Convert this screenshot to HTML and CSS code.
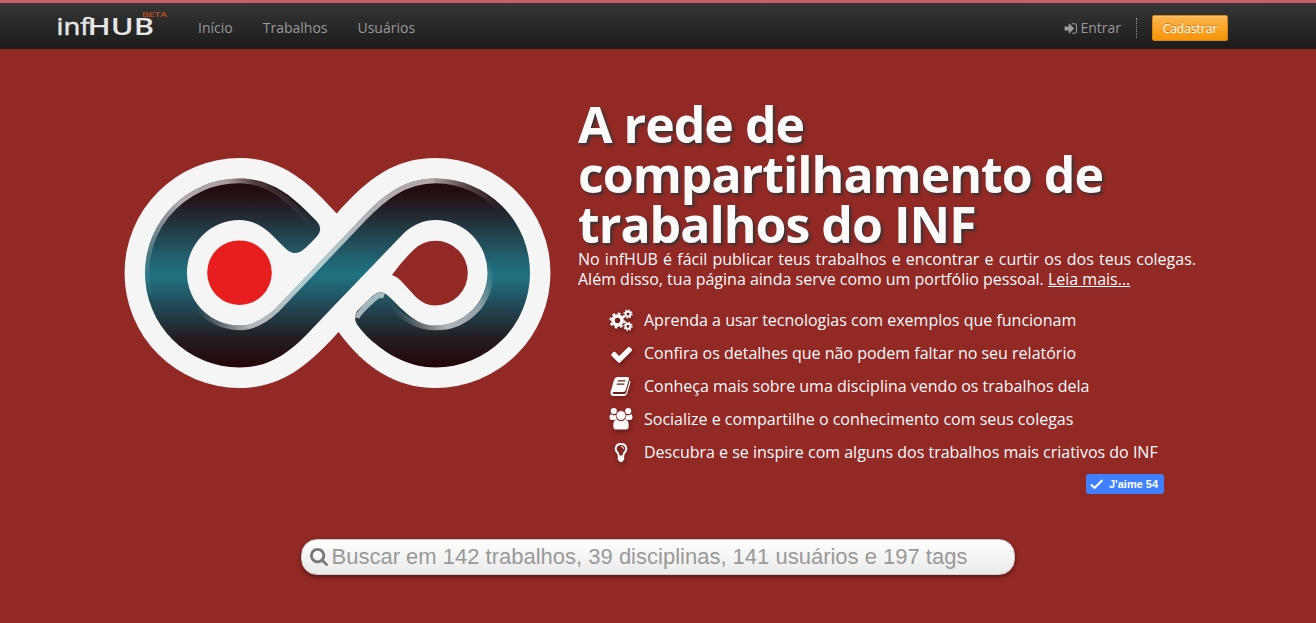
FILE: index.html
```html
<!DOCTYPE html>
<html lang="pt-BR">
<head>
<meta charset="utf-8">
<title>infHUB</title>
<link rel="stylesheet" href="styles.css">
</head>
<body>
<header class="navbar">
  <a class="brand">
    <svg width="112" height="38" viewBox="56 6 112 38">
      <text class="brand-light" x="56.500" y="35" textLength="33" lengthAdjust="spacingAndGlyphs">inf</text>
      <text class="brand-bold" x="87.500" y="35" textLength="66.500" lengthAdjust="spacingAndGlyphs">HUB</text>
      <text class="brand-beta" x="142" y="16.500" textLength="25" lengthAdjust="spacingAndGlyphs">BETA</text>
    </svg>
  </a>
  <nav class="menu"><a>Início</a><a>Trabalhos</a><a>Usuários</a></nav>
  <div class="account">
    <a class="login"><svg class="login-icon" viewBox="64 256 1600 1280"><path d="M1312 896q0 26-19 45l-544 544q-19 19-45 19t-45-19-19-45v-288h-448q-26 0-45-19t-19-45v-384q0-26 19-45t45-19h448v-288q0-26 19-45t45-19 45 19l544 544q19 19 19 45zm352-352v704q0 119-84.5 203.5t-203.5 84.5h-320q-13 0-22.5-9.5t-9.5-22.5q0-4-1-20t-.5-26.5 3-23.5 10-19.5 20.5-6.5h320q66 0 113-47t47-113v-704q0-66-47-113t-113-47h-312l-11.5-1-11.5-3-8-5.5-7-9-2-13.5q0-4-1-20t-.5-26.5 3-23.5 10-19.5 20.5-6.5h320q119 0 203.5 84.5t84.5 203.5z"/></svg>Entrar</a>
    <span class="divider"></span>
    <a class="signup">Cadastrar</a>
  </div>
</header>
<main class="hero">
  <div class="row">
    <svg class="logo" width="436" height="246" viewBox="120 150 436 246">
      <defs>
        <linearGradient id="band" gradientUnits="userSpaceOnUse" x1="0" y1="178" x2="0" y2="368">
          <stop offset="0" stop-color="#230708"/><stop offset=".07" stop-color="#230d10"/><stop offset=".17" stop-color="#23222a"/><stop offset=".3" stop-color="#22434e"/><stop offset=".43" stop-color="#216372"/><stop offset=".51" stop-color="#217182"/><stop offset=".6" stop-color="#215d6b"/><stop offset=".72" stop-color="#223d47"/><stop offset=".84" stop-color="#231e22"/><stop offset="1" stop-color="#230406"/>
        </linearGradient>
        <linearGradient id="shineL" gradientUnits="userSpaceOnUse" x1="148" y1="295" x2="312" y2="222">
          <stop offset="0" stop-color="#fff" stop-opacity="0"/><stop offset=".2" stop-color="#fff" stop-opacity=".4"/><stop offset=".38" stop-color="#fff" stop-opacity=".65"/><stop offset=".66" stop-color="#fff" stop-opacity=".6"/><stop offset=".8" stop-color="#fff" stop-opacity=".2"/><stop offset="1" stop-color="#fff" stop-opacity="0"/>
        </linearGradient>
        <linearGradient id="shineR" gradientUnits="userSpaceOnUse" x1="430" y1="0" x2="500" y2="0">
          <stop offset="0" stop-color="#fff" stop-opacity=".65"/><stop offset=".5" stop-color="#fff" stop-opacity=".25"/><stop offset="1" stop-color="#fff" stop-opacity="0"/>
        </linearGradient>
        <linearGradient id="shineB" gradientUnits="userSpaceOnUse" x1="197" y1="0" x2="250" y2="0">
          <stop offset="0" stop-color="#fff" stop-opacity="0"/><stop offset="1" stop-color="#fff" stop-opacity=".65"/>
        </linearGradient>
        <linearGradient id="shineI" gradientUnits="userSpaceOnUse" x1="390" y1="305" x2="490" y2="262">
          <stop offset="0" stop-color="#fff" stop-opacity="0"/><stop offset=".4" stop-color="#fff" stop-opacity=".65"/><stop offset=".75" stop-color="#fff" stop-opacity=".5"/><stop offset="1" stop-color="#fff" stop-opacity="0"/>
        </linearGradient>
        <filter id="soft" x="-10%" y="-10%" width="120%" height="120%"><feGaussianBlur stdDeviation=".6"/></filter>
        <path id="armLeft" d="M239.500 178.500C268 178.500 288 193 305 209.500L317 221.500Q322 227 319 233.500Q317 237 306 247.500Q300 253 295 253Q290 253 285 248L273 236Q257 220 239.500 220A52.500 52.700 0 0 0 239.500 325.500C255 325.500 267 316 275 309L363 216.700C381 198 402 178.500 435.500 178.500A94.500 94.500 0 0 1 435.500 367.500C410 367.500 389 355 377 345Q366 337 357 324.500Q353 318 357 311Q360 308 373 295.500Q380 290 386 294Q390 297 399 306.500C411 318 420 325.500 435.500 325.500A52 52.700 0 0 0 435.500 220C424 220 414 224 404 233L330 310L311 330C292 350 272 367.500 239.500 367.500A94.500 94.500 0 0 1 239.500 178.500Z"/>
        <clipPath id="bandClip"><use href="#armLeft"/></clipPath>
      </defs>
      <path fill="#f5f5f5" fill-rule="evenodd" d="M239.500 158C282 158 308 182 336.700 213.500C368 178 395 158 435.500 158A115 115 0 0 1 435.500 388C396 388 365 368 338.500 332C308 366 281 388 239.500 388A115 115 0 0 1 239.500 158ZM392 275Q398 277 402 282C413 293 420 305.500 435.500 305.500A32.300 32.400 0 0 0 435.500 240.700Q423 240.700 414 249.500Q401 262 392 275Z"/>
      <use href="#armLeft" fill="url(#band)"/>
      <g clip-path="url(#bandClip)"><g fill="none" stroke-width="5.500" filter="url(#soft)">
        <path stroke="url(#shineL)" d="M149 295A92.500 92.500 0 0 1 239.500 180.500C267 180.500 286 196 311 224"/>
        <path stroke="url(#shineB)" d="M194 303A55 55 0 0 0 239.500 327.500C256 327.500 268 318 276.500 310L364.500 217.700C382.500 199 404 180.500 435.500 180.500"/>
        <path stroke="url(#shineR)" d="M435.500 180.500A92.500 92.500 0 0 1 502 210"/>
        <path stroke="url(#shineI)" d="M386 302Q410 327.500 435.500 327.500A54 54 0 0 0 489.500 262"/>
        <path stroke="#fff" stroke-opacity=".6" d="M357 318Q358 313 375 298Q379 294 384 296"/>
      </g></g>
      <circle cx="239.500" cy="272.700" r="32.300" fill="#e81e1e"/>
    </svg>
    <section class="intro">
      <h1>A rede de<br>compartilhamento de<br>trabalhos do INF</h1>
      <p>No infHUB é fácil publicar teus trabalhos e encontrar e curtir os dos teus colegas. Além disso, tua página ainda serve como um portfólio pessoal. <a class="more">Leia mais...</a></p>
      <ul class="features">
        <li><svg class="icon" viewBox="0 0 24 24"><g fill="none" stroke="#fafafa"><circle cx="8.500" cy="12.500" r="4.500" stroke-width="3.600"/><circle cx="8.500" cy="12.500" r="7" stroke-width="2.200" stroke-dasharray="2.750 2.750"/><circle cx="19" cy="6" r="2.500" stroke-width="2"/><circle cx="19" cy="6" r="4" stroke-width="1.300" stroke-dasharray="1.570 1.570"/><circle cx="19" cy="18.300" r="2.500" stroke-width="2"/><circle cx="19" cy="18.300" r="4" stroke-width="1.300" stroke-dasharray="1.570 1.570"/></g></svg>Aprenda a usar tecnologias com exemplos que funcionam</li>
        <li><svg class="icon" viewBox="-40 -100 1780 1780"><path d="M1671 566q0 40-28 68l-724 724-136 136q-28 28-68 28t-68-28l-136-136-362-362q-28-28-28-68t28-68l136-136q28-28 68-28t68 28l294 295 656-657q28-28 68-28t68 28l136 136q28 28 28 68z"/></svg>Confira os detalhes que não podem faltar no seu relatório</li>
        <li><svg class="icon" viewBox="0 0 24 24"><path fill-rule="evenodd" d="M8.500 3H18.500Q20.500 3 20 5L16.700 16.300Q16.200 18 14.500 18H5Q3.300 18 3.500 19Q3.800 20 5.300 20H15.500Q16.700 20 17.200 18.700L20.700 6.300Q21.800 7 21.400 8.500L18.200 19.600Q17.500 22 15 22H5Q1 22 1.500 18Q1.600 17 2.200 16L4.500 7.500Q5 6 5.600 4.700Q6.300 3 8.500 3ZM9 6.300L8.600 7.500H16.100L16.500 6.300ZM8 9.500L7.600 10.700H15.100L15.500 9.500Z"/></svg>Conheça mais sobre uma disciplina vendo os trabalhos dela</li>
        <li><svg class="icon" viewBox="0 0 24 24"><circle cx="4.800" cy="4" r="3.100"/><circle cx="19.200" cy="4" r="3.100"/><path d="M2 7.300Q4.800 9 7 7.700Q6.700 11 9 13H3Q.5 13 .5 10.800Q.5 7.500 2 7.300ZM22 7.300Q19.200 9 17 7.700Q17.300 11 15 13H21Q23.500 13 23.500 10.800Q23.500 7.500 22 7.300Z"/><path stroke="#922925" stroke-width=".5" d="M7.800 12.300Q12 15.800 16.200 12.300Q20 12.500 20 19Q20 22.700 17 22.700H7Q4 22.700 4 19Q4 12.500 7.800 12.300Z"/><circle cx="12" cy="8.500" r="4.800" stroke="#922925" stroke-width=".6"/></svg>Socialize e compartilhe o conhecimento com seus colegas</li>
        <li><svg class="icon" viewBox="0 0 24 24"><path fill="none" stroke="#fafafa" stroke-width="2" d="M9.800 16Q9.600 13.500 8 12Q6.600 10.300 6.700 8.500Q7.200 4 12 4T17.300 8.500Q17.400 10.300 16 12Q14.400 13.500 14.200 16"/><path fill="none" stroke="#fafafa" d="M12 6.500Q14.500 6.700 14.800 9"/><path d="M8.800 15.500H15.200V19.500L13.500 21.500Q12 23 10.500 21.500L8.800 19.500Z"/></svg>Descubra e se inspire com alguns dos trabalhos mais criativos do INF</li>
      </ul>
      <a class="like"><svg width="13" height="10" viewBox="0 0 13 10"><path d="M1 5.500L4.500 9L12.500 1" fill="none" stroke="#fff" stroke-width="2"/></svg>J'aime 54</a>
    </section>
  </div>
  <div class="search">
    <svg class="search-icon" viewBox="64 128 1664 1664"><path d="M1216 832q0-185-131.500-316.500t-316.500-131.500-316.500 131.500-131.500 316.500 131.500 316.500 316.500 131.500 316.500-131.500 131.500-316.500zm512 832q0 52-38 90t-90 38q-54 0-90-38l-343-342q-179 124-399 124-143 0-273.500-55.500t-225-150-150-225-55.500-273.500 55.500-273.500 150-225 225-150 273.500-55.500 273.500 55.500 225 150 150 225 55.500 273.500q0 220-124 399l343 343q37 37 37 90z"/></svg>
    <span>Buscar em 142 trabalhos, 39 disciplinas, 141 usuários e 197 tags</span>
  </div>
</main>
</body>
</html>
```
FILE: styles.css
```css
* { box-sizing: border-box; }
body { margin: 0; height: 623px; overflow: hidden; background: #922925; color: #fafafa; font: 16px/20px "Open Sans", sans-serif; }
.navbar { height: 49px; border-top: 3px solid #c85f62; background: linear-gradient(#363636, #1b1b1b); display: flex; align-items: flex-start; padding: 0 88px 0 56px; color: #999; font-size: 14px; }
.brand { display: flex; padding-top: 3px; }
.brand svg { overflow: visible; }
.brand-light, .brand-bold { font-size: 23px; fill: #e6e6e6; }
.brand-light { stroke: #e6e6e6; stroke-width: .5px; }
.brand-bold { font-weight: 600; }
.brand-beta { font-size: 8px; fill: #c4511b; stroke: #c4511b; stroke-width: .2px; }
.menu { display: flex; gap: 30px; padding: 15px 0 0 30px; }
.account { margin-left: auto; display: flex; align-items: flex-start; }
.login { display: flex; align-items: center; gap: 3px; padding-top: 15px; }
.login-icon { width: 13px; height: 11px; fill: #999; }
.divider { height: 20px; margin: 15px 15px 0; border-left: 1px dotted #999; }
.signup { margin-top: 12px; width: 76px; height: 26px; border: 1px solid #d58512; border-radius: 2px; background: linear-gradient(#fbb450, #f89406); color: #fff; font-size: 12px; line-height: 26px; text-align: center; text-shadow: 0 -1px 0 rgba(0,0,0,.25); box-shadow: inset 0 1px 0 rgba(255,255,255,.2); }
.row { display: flex; align-items: flex-start; padding: 50px 0 0 120px; height: 490px; }
.logo { margin-top: 51px; flex: none; }
.intro { width: 618px; margin-left: 22px; display: flex; flex-direction: column; }
h1 { margin: 0; font-size: 50px; line-height: 50px; font-weight: 700; letter-spacing: -1px; text-shadow: 2px 2px 3px #333; }
p { margin: 0; text-align: justify; }
.more { text-decoration: underline; }
.features { list-style: none; margin: 14px 0 0 30.500px; padding: 0; }
.features li { display: flex; align-items: center; gap: 11.500px; height: 33px; white-space: nowrap; }
.icon { width: 24px; height: 24px; fill: #fafafa; filter: drop-shadow(1px 2px 2px rgba(40,10,10,.45)); }
.like { align-self: flex-end; display: flex; align-items: center; gap: 6px; width: 78px; height: 20px; margin: 6px 32px 0 0; padding-left: 4px; border-radius: 3px; background: #4080ff; color: #fff; font: bold 11px/20px "Liberation Sans", sans-serif; white-space: nowrap; }
.search { width: 714px; height: 36px; margin-left: 301px; display: flex; align-items: center; gap: 3.500px; padding-left: 8px; border: 1px solid #ccc; border-radius: 16px; background: linear-gradient(#fff, #eaeaea); box-shadow: 0 2px 4px rgba(0,0,0,.4); color: #999; font: 22px/34px "Liberation Sans", sans-serif; white-space: nowrap; }
.search-icon { width: 18px; height: 18px; fill: #777; }
```
